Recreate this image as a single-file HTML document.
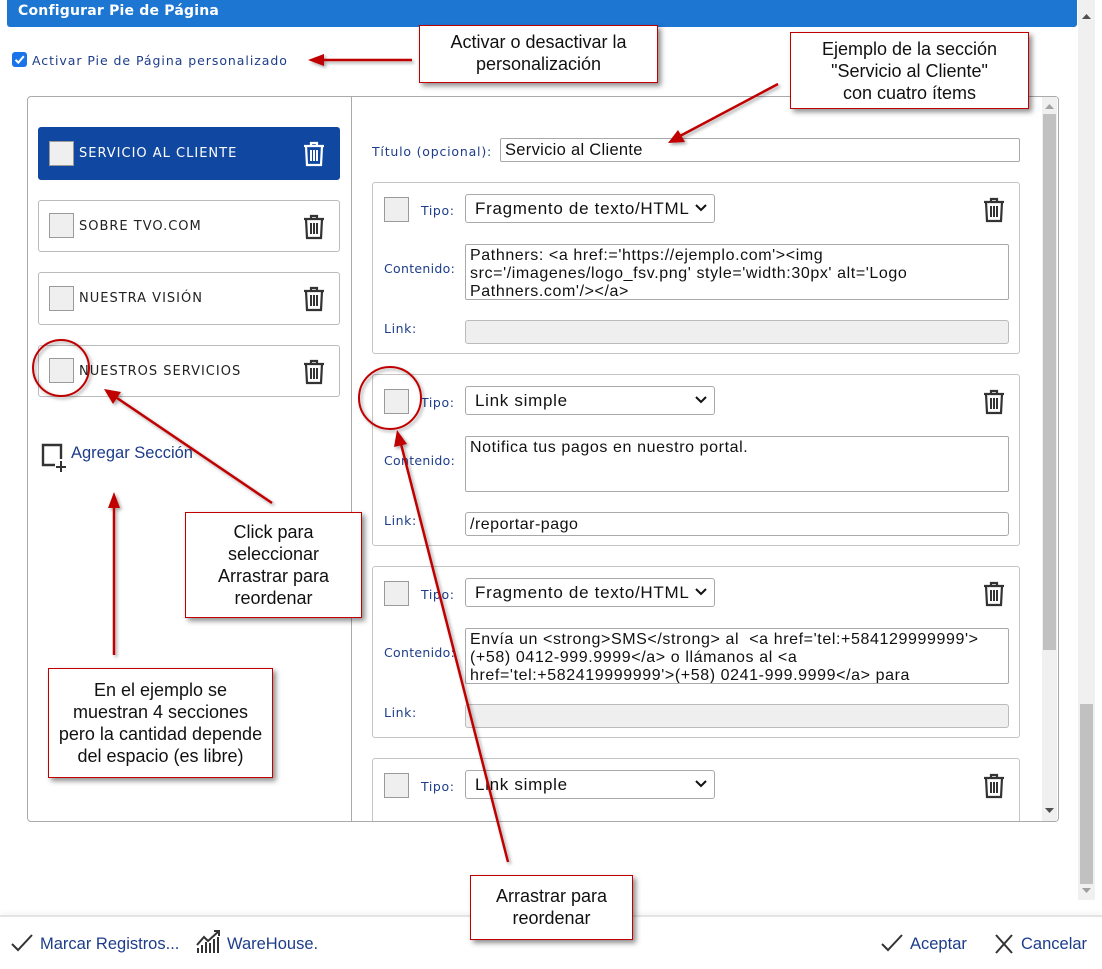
<!DOCTYPE html>
<html><head><meta charset="utf-8">
<style>
*{box-sizing:border-box;margin:0;padding:0}
body{width:1102px;height:969px;background:#fff;position:relative;overflow:hidden;font-family:"Liberation Sans",sans-serif}
.a{position:absolute}
.hdr{left:7px;top:0;width:1070px;height:27px;background:#1c76d2;border-radius:0 0 3px 3px;color:#fff;font:bold 14px "DejaVu Sans",sans-serif;padding:3px 0 0 11px;letter-spacing:.2px}
.lbl{font:12.5px "DejaVu Sans",sans-serif;color:#1d3d8a;letter-spacing:.6px}
.cb{width:25px;height:25px;background:#efefef;border:1px solid #9a9a9a}
.sec{left:38px;width:302px;border:1px solid #bbb;border-radius:3px;background:#fff}
.sec .t{position:absolute;left:40px;font:13px "DejaVu Sans",sans-serif;letter-spacing:1px;color:#222}
.card{left:372px;width:648px;height:172px;border:1px solid #c4c4c4;border-radius:3px;background:#fff}
.sel{position:absolute;left:92px;top:11px;width:250px;height:29px;border:1px solid #a9a9a9;border-radius:3px;font:17px "Liberation Sans",sans-serif;letter-spacing:.7px;color:#111;padding:4px 0 0 9px}
.sel svg{position:absolute;right:7px;top:9px}
.ta{position:absolute;left:92px;top:61px;width:544px;height:56px;border:1px solid #a9a9a9;border-radius:2px;font:16px/18px "Liberation Sans",sans-serif;letter-spacing:.6px;color:#111;padding:2px 4px;overflow:hidden;white-space:nowrap}
.in{position:absolute;left:92px;top:137px;width:544px;height:24px;border:1px solid #bbb;border-radius:3px;background:#efefef;font:16px "Liberation Sans",sans-serif;letter-spacing:.5px;padding:3px 4px;color:#111}
.co{position:absolute;background:#fff;border:1px solid #c00000;box-shadow:3px 3px 5px rgba(0,0,0,.45);font:18px/22px "Liberation Sans",sans-serif;color:#111;text-align:center}
.ft{font:16.5px "Liberation Sans",sans-serif;color:#1d3d8a}
</style></head><body>
<div class="a hdr">Configurar Pie de Página</div>
<div class="a" style="left:1078px;top:0;width:17px;height:900px;background:#f0f0f0"></div>
<div class="a" style="left:1080px;top:704px;width:13px;height:180px;background:#c1c1c1"></div>
<svg class="a" style="left:1081px;top:13px" width="11" height="6"><path d="M1 6L5.5 1L10 6Z" fill="#505050"/></svg>
<svg class="a" style="left:1081px;top:888px" width="11" height="6"><path d="M1 0L5.5 5L10 0Z" fill="#a0a0a0"/></svg>

<div class="a" style="left:12px;top:52px;width:15px;height:15px;background:#1a73e8;border-radius:3px"></div>
<svg class="a" style="left:12px;top:52px" width="15" height="15"><path d="M3.5 7.8L6.3 10.6L11.8 4.2" stroke="#fff" stroke-width="2" fill="none"/></svg>
<div class="a lbl" style="left:32px;top:53px;letter-spacing:.95px">Activar Pie de Página personalizado</div>

<div class="a" style="left:27px;top:96px;width:1032px;height:726px;border:1px solid #aaa;border-radius:4px"></div>
<div class="a" style="left:351px;top:97px;width:1px;height:724px;background:#aaa"></div>
<div class="a" style="left:1042px;top:97px;width:15px;height:724px;background:#f0f0f0"></div>
<div class="a" style="left:1043px;top:114px;width:13px;height:536px;background:#c1c1c1"></div>
<svg class="a" style="left:1045px;top:104px" width="9" height="5"><path d="M0 5L4.5 0L9 5Z" fill="#a3a3a3"/></svg>
<svg class="a" style="left:1045px;top:808px" width="9" height="5"><path d="M0 0L4.5 5L9 0Z" fill="#505050"/></svg>

<div class="a sec" style="top:127px;height:53px;background:#0f47a1;border-color:#0f47a1"><div class="a cb" style="left:10px;top:13px"></div><div class="t" style="top:18px;color:#fff">SERVICIO AL CLIENTE</div>
<svg class="a" style="left:264px;top:13px" width="22" height="26" viewBox="0 0 22 26"><path d="M1 5H21M8 5V2H14V5M3 5L4 24H18L19 5" stroke="#fff" stroke-width="2.2" fill="none"/><path d="M8 9V20M11 9V20M14 9V20" stroke="#fff" stroke-width="2"/></svg></div>
<div class="a sec" style="top:200px;height:52px"><div class="a cb" style="left:10px;top:12px"></div><div class="t" style="top:18px">SOBRE TVO.COM</div>
<svg class="a" style="left:264px;top:13px" width="22" height="26" viewBox="0 0 22 26"><path d="M1 5H21M8 5V2H14V5M3 5L4 24H18L19 5" stroke="#333" stroke-width="2.2" fill="none"/><path d="M8 9V20M11 9V20M14 9V20" stroke="#333" stroke-width="2"/></svg></div>
<div class="a sec" style="top:272px;height:53px"><div class="a cb" style="left:10px;top:13px"></div><div class="t" style="top:18px">NUESTRA VISIÓN</div>
<svg class="a" style="left:264px;top:13px" width="22" height="26" viewBox="0 0 22 26"><path d="M1 5H21M8 5V2H14V5M3 5L4 24H18L19 5" stroke="#333" stroke-width="2.2" fill="none"/><path d="M8 9V20M11 9V20M14 9V20" stroke="#333" stroke-width="2"/></svg></div>
<div class="a sec" style="top:345px;height:52px"><div class="a cb" style="left:10px;top:12px"></div><div class="t" style="top:18px">NUESTROS SERVICIOS</div>
<svg class="a" style="left:264px;top:13px" width="22" height="26" viewBox="0 0 22 26"><path d="M1 5H21M8 5V2H14V5M3 5L4 24H18L19 5" stroke="#333" stroke-width="2.2" fill="none"/><path d="M8 9V20M11 9V20M14 9V20" stroke="#333" stroke-width="2"/></svg></div>

<svg class="a" style="left:41px;top:443px" width="26" height="30"><path d="M14 22H2V2H20V16" stroke="#333" stroke-width="2.4" fill="none"/><path d="M20 18V29M15 24H25" stroke="#333" stroke-width="2"/></svg>
<div class="a" style="left:71px;top:444px;font:16.5px 'Liberation Sans',sans-serif;color:#1d3d8a">Agregar Sección</div>

<div class="a lbl" style="left:372px;top:144px;letter-spacing:.8px">Título (opcional):</div>
<div class="a" style="left:500px;top:138px;width:520px;height:24px;border:1px solid #a9a9a9;border-radius:2px;font:16.5px 'Liberation Sans',sans-serif;letter-spacing:.3px;padding:2px 4px;color:#111">Servicio al Cliente</div>

<div class="a card" style="top:182px">
<div class="a cb" style="left:11px;top:14px"></div><div class="a lbl" style="left:48px;top:20px">Tipo:</div>
<div class="sel">Fragmento de texto/HTML<svg width="12" height="8"><path d="M1 1L6 6L11 1" stroke="#111" stroke-width="2" fill="none"/></svg></div>
<svg class="a" style="left:610px;top:14px" width="22" height="26" viewBox="0 0 22 26"><path d="M1 5H21M8 5V2H14V5M3 5L4 24H18L19 5" stroke="#333" stroke-width="2.2" fill="none"/><path d="M8 9V20M11 9V20M14 9V20" stroke="#333" stroke-width="2"/></svg>
<div class="a lbl" style="left:11px;top:78px;letter-spacing:.3px">Contenido:</div>
<div class="ta">Pathners: &lt;a href:='https://ejemplo.com'&gt;&lt;img<br>src='/imagenes/logo_fsv.png' style='width:30px' alt='Logo<br>Pathners.com'/&gt;&lt;/a&gt;</div>
<div class="a lbl" style="left:11px;top:138px">Link:</div>
<div class="in"></div>
</div>
<div class="a card" style="top:374px">
<div class="a cb" style="left:11px;top:14px"></div><div class="a lbl" style="left:48px;top:20px">Tipo:</div>
<div class="sel">Link simple<svg width="12" height="8"><path d="M1 1L6 6L11 1" stroke="#111" stroke-width="2" fill="none"/></svg></div>
<svg class="a" style="left:610px;top:14px" width="22" height="26" viewBox="0 0 22 26"><path d="M1 5H21M8 5V2H14V5M3 5L4 24H18L19 5" stroke="#333" stroke-width="2.2" fill="none"/><path d="M8 9V20M11 9V20M14 9V20" stroke="#333" stroke-width="2"/></svg>
<div class="a lbl" style="left:11px;top:78px;letter-spacing:.3px">Contenido:</div>
<div class="ta">Notifica tus pagos en nuestro portal.</div>
<div class="a lbl" style="left:11px;top:138px">Link:</div>
<div class="in" style="background:#fff;border-color:#a9a9a9">/reportar-pago</div>
</div>
<div class="a card" style="top:566px">
<div class="a cb" style="left:11px;top:14px"></div><div class="a lbl" style="left:48px;top:20px">Tipo:</div>
<div class="sel">Fragmento de texto/HTML<svg width="12" height="8"><path d="M1 1L6 6L11 1" stroke="#111" stroke-width="2" fill="none"/></svg></div>
<svg class="a" style="left:610px;top:14px" width="22" height="26" viewBox="0 0 22 26"><path d="M1 5H21M8 5V2H14V5M3 5L4 24H18L19 5" stroke="#333" stroke-width="2.2" fill="none"/><path d="M8 9V20M11 9V20M14 9V20" stroke="#333" stroke-width="2"/></svg>
<div class="a lbl" style="left:11px;top:78px;letter-spacing:.3px">Contenido:</div>
<div class="ta">Envía un &lt;strong&gt;SMS&lt;/strong&gt; al &nbsp;&lt;a href='tel:+584129999999'&gt;<br>(+58) 0412-999.9999&lt;/a&gt; o llámanos al &lt;a<br>href='tel:+582419999999'&gt;(+58) 0241-999.9999&lt;/a&gt; para</div>
<div class="a lbl" style="left:11px;top:138px">Link:</div>
<div class="in"></div>
</div>
<div class="a" style="left:352px;top:758px;width:690px;height:63px;overflow:hidden">
<div class="a card" style="left:20px;top:0">
<div class="a cb" style="left:11px;top:14px"></div><div class="a lbl" style="left:48px;top:20px">Tipo:</div>
<div class="sel">Link simple<svg width="12" height="8"><path d="M1 1L6 6L11 1" stroke="#111" stroke-width="2" fill="none"/></svg></div>
<svg class="a" style="left:610px;top:14px" width="22" height="26" viewBox="0 0 22 26"><path d="M1 5H21M8 5V2H14V5M3 5L4 24H18L19 5" stroke="#333" stroke-width="2.2" fill="none"/><path d="M8 9V20M11 9V20M14 9V20" stroke="#333" stroke-width="2"/></svg>
</div></div>

<div class="a" style="left:0;top:915px;width:1102px;height:2px;background:#e4e4e4;box-shadow:0 -2px 4px rgba(0,0,0,.08)"></div>
<svg class="a" style="left:11px;top:934px" width="22" height="18"><path d="M1 10L7 16L21 1" stroke="#333" stroke-width="2" fill="none"/></svg>
<div class="a ft" style="left:40px;top:935px">Marcar Registros...</div>
<svg class="a" style="left:196px;top:929px" width="26" height="26"><path d="M2 24V19M6 24V16M10 24V13M14 24V14M18 24V10M22 24V8" stroke="#333" stroke-width="2"/><path d="M1 16L8 8L12 12L23 2M18 2H23V7" stroke="#333" stroke-width="2" fill="none"/></svg>
<div class="a ft" style="left:227px;top:935px">WareHouse.</div>
<svg class="a" style="left:881px;top:934px" width="22" height="18"><path d="M1 10L7 16L21 1" stroke="#333" stroke-width="2" fill="none"/></svg>
<div class="a ft" style="left:910px;top:935px">Aceptar</div>
<svg class="a" style="left:994px;top:934px" width="20" height="20"><path d="M2 1L18 19M18 1L2 19" stroke="#333" stroke-width="2"/></svg>
<div class="a ft" style="left:1021px;top:935px">Cancelar</div>

<svg class="a" style="left:0;top:0" width="1102" height="969">
<defs><filter id="s"><feDropShadow dx="2" dy="2" stdDeviation="1.5" flood-opacity=".35"/></filter></defs>
<g stroke="#c00000" stroke-width="2.5" fill="#c00000" filter="url(#s)">
<line x1="412" y1="60" x2="322" y2="60"/><path d="M308 60L324 54L324 66Z" stroke="none"/>
<line x1="778" y1="84" x2="680" y2="136"/><path d="M668 143L678 130L685 142Z" stroke="none"/>
<line x1="272" y1="503" x2="117" y2="398"/><path d="M104 389L121 392L113 404Z" stroke="none"/>
<line x1="114" y1="655" x2="114" y2="506"/><path d="M114 492L108 508L120 508Z" stroke="none"/>
<line x1="508" y1="862" x2="401" y2="444"/><path d="M397 430L394 447L407 444Z" stroke="none"/>
<circle cx="61" cy="368" r="28" fill="none" stroke-width="2"/>
<circle cx="390" cy="398" r="31" fill="none" stroke-width="2"/>
</g></svg>
<div class="co" style="left:419px;top:25px;width:239px;height:58px;padding-top:5px">Activar o desactivar la<br>personalización</div>
<div class="co" style="left:790px;top:32px;width:239px;height:77px;padding-top:5px">Ejemplo de la sección<br>"Servicio al Cliente"<br>con cuatro ítems</div>
<div class="co" style="left:185px;top:512px;width:177px;height:106px;padding-top:8px">Click para<br>seleccionar<br>Arrastrar para<br>reordenar</div>
<div class="co" style="left:48px;top:668px;width:225px;height:110px;padding-top:10px">En el ejemplo se<br>muestran 4 secciones<br>pero la cantidad depende<br>del espacio (es libre)</div>
<div class="co" style="left:470px;top:875px;width:163px;height:65px;padding-top:9px">Arrastrar para<br>reordenar</div>
</body></html>
